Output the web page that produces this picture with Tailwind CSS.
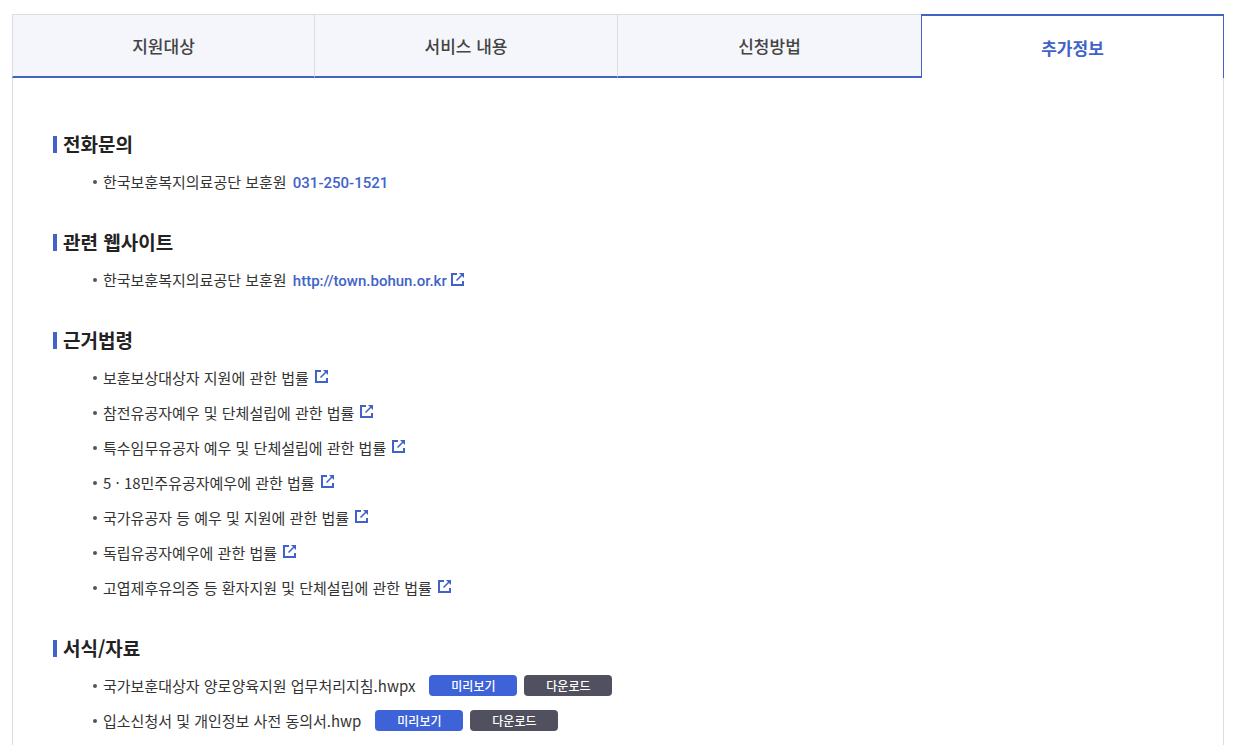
<!DOCTYPE html>
<html lang="ko">
<head>
<meta charset="utf-8">
<meta name="viewport" content="width=device-width, initial-scale=1">
<title>추가정보</title>
<script src="https://cdn.jsdelivr.net/npm/@tailwindcss/browser@4"></script>
</head>
<body class="flex min-h-screen flex-col bg-white px-3 pt-[14px] font-['Noto_Sans_CJK_KR',sans-serif] text-[15px] text-[#333]">
<svg class="hidden" aria-hidden="true">
  <symbol id="ext" viewBox="0 0 13 13">
    <path d="M6 1H1v11h11V8" fill="none" stroke="currentColor" stroke-width="2"/>
    <path d="M5.500 7.500 11 2" fill="none" stroke="currentColor" stroke-width="1.600"/>
    <path d="M8 0H13v5z" fill="currentColor"/>
  </symbol>
</svg>
<div role="tablist" class="grid h-16 grid-cols-4 text-[17px] font-medium text-[#444]">
  <button role="tab" aria-selected="false" class="border-x border-t border-b-2 border-[#ddd] border-b-[#4163c2] bg-[#f5f6fb] pt-px">지원대상</button>
  <button role="tab" aria-selected="false" class="border-t border-r border-b-2 border-[#ddd] border-b-[#4163c2] bg-[#f5f6fb] pt-px">서비스 내용</button>
  <button role="tab" aria-selected="false" class="border-t border-b-2 border-[#ddd] border-b-[#4163c2] bg-[#f5f6fb] pt-px">신청방법</button>
  <button role="tab" aria-selected="true" class="border-x border-t-2 border-[#4163c2] pt-px font-bold text-[#4163c9]">추가정보</button>
</div>
<main role="tabpanel" class="flex grow flex-col gap-[30px] border-x border-[#ddd] px-10 pt-[53px]">
  <section>
    <h2 class="flex h-[27px] items-center gap-[6px] text-[19px] font-bold text-[#222] before:h-[17px] before:w-1 before:bg-[#4163c9]">전화문의</h2>
    <ul class="mt-[6px] pl-10 leading-[35px]">
      <li class="flex h-[35px] items-center before:mr-[6px] before:size-1 before:rounded-full before:bg-[#555]"><span>한국보훈복지의료공단 보훈원 <a href="tel:031-250-1521" class="ml-[2px] font-['Roboto'] leading-none font-medium text-[#4163c9]">031-250-1521</a></span></li>
    </ul>
  </section>
  <section>
    <h2 class="flex h-[27px] items-center gap-[6px] text-[19px] font-bold text-[#222] before:h-[17px] before:w-1 before:bg-[#4163c9]">관련 웹사이트</h2>
    <ul class="mt-[6px] pl-10 leading-[35px]">
      <li class="flex h-[35px] items-center before:mr-[6px] before:size-1 before:rounded-full before:bg-[#555]"><span>한국보훈복지의료공단 보훈원 <a href="http://town.bohun.or.kr" class="ml-[2px] font-['Roboto'] leading-none font-medium text-[#4163c9]">http://town.bohun.or.kr<svg class="ml-1 inline size-[13px] align-baseline" aria-hidden="true"><use href="#ext"/></svg></a></span></li>
    </ul>
  </section>
  <section>
    <h2 class="flex h-[27px] items-center gap-[6px] text-[19px] font-bold text-[#222] before:h-[17px] before:w-1 before:bg-[#4163c9]">근거법령</h2>
    <ul class="mt-[6px] pl-10 leading-[35px]">
      <li class="flex items-center before:mr-[6px] before:size-1 before:rounded-full before:bg-[#555]"><a href="#" class="flex items-center gap-[6px]">보훈보상대상자 지원에 관한 법률<svg class="mb-[3px] size-[13px] text-[#4163c9]" aria-hidden="true"><use href="#ext"/></svg></a></li>
      <li class="flex items-center before:mr-[6px] before:size-1 before:rounded-full before:bg-[#555]"><a href="#" class="flex items-center gap-[6px]">참전유공자예우 및 단체설립에 관한 법률<svg class="mb-[3px] size-[13px] text-[#4163c9]" aria-hidden="true"><use href="#ext"/></svg></a></li>
      <li class="flex items-center before:mr-[6px] before:size-1 before:rounded-full before:bg-[#555]"><a href="#" class="flex items-center gap-[6px]">특수임무유공자 예우 및 단체설립에 관한 법률<svg class="mb-[3px] size-[13px] text-[#4163c9]" aria-hidden="true"><use href="#ext"/></svg></a></li>
      <li class="flex items-center before:mr-[6px] before:size-1 before:rounded-full before:bg-[#555]"><a href="#" class="flex items-center gap-[6px]">5 · 18민주유공자예우에 관한 법률<svg class="mb-[3px] size-[13px] text-[#4163c9]" aria-hidden="true"><use href="#ext"/></svg></a></li>
      <li class="flex items-center before:mr-[6px] before:size-1 before:rounded-full before:bg-[#555]"><a href="#" class="flex items-center gap-[6px]">국가유공자 등 예우 및 지원에 관한 법률<svg class="mb-[3px] size-[13px] text-[#4163c9]" aria-hidden="true"><use href="#ext"/></svg></a></li>
      <li class="flex items-center before:mr-[6px] before:size-1 before:rounded-full before:bg-[#555]"><a href="#" class="flex items-center gap-[6px]">독립유공자예우에 관한 법률<svg class="mb-[3px] size-[13px] text-[#4163c9]" aria-hidden="true"><use href="#ext"/></svg></a></li>
      <li class="flex items-center before:mr-[6px] before:size-1 before:rounded-full before:bg-[#555]"><a href="#" class="flex items-center gap-[6px]">고엽제후유의증 등 환자지원 및 단체설립에 관한 법률<svg class="mb-[3px] size-[13px] text-[#4163c9]" aria-hidden="true"><use href="#ext"/></svg></a></li>
    </ul>
  </section>
  <section>
    <h2 class="flex h-[27px] items-center gap-[6px] text-[19px] font-bold text-[#222] before:h-[17px] before:w-1 before:bg-[#4163c9]">서식/자료</h2>
    <ul class="mt-[6px] pl-10 leading-[35px]">
      <li class="flex items-center before:mr-[6px] before:size-1 before:rounded-full before:bg-[#555]"><span class="mr-[14px]">국가보훈대상자 양로양육지원 업무처리지침.hwpx</span><button class="mr-[7px] h-[21px] w-[88px] rounded bg-[#3e62d8] text-xs leading-5 font-medium text-white">미리보기</button><button class="h-[21px] w-[88px] rounded bg-[#50505f] text-xs leading-5 font-medium text-white">다운로드</button></li>
      <li class="flex items-center before:mr-[6px] before:size-1 before:rounded-full before:bg-[#555]"><span class="mr-[14px]">입소신청서 및 개인정보 사전 동의서.hwp</span><button class="mr-[7px] h-[21px] w-[88px] rounded bg-[#3e62d8] text-xs leading-5 font-medium text-white">미리보기</button><button class="h-[21px] w-[88px] rounded bg-[#50505f] text-xs leading-5 font-medium text-white">다운로드</button></li>
    </ul>
  </section>
</main>
</body>
</html>
